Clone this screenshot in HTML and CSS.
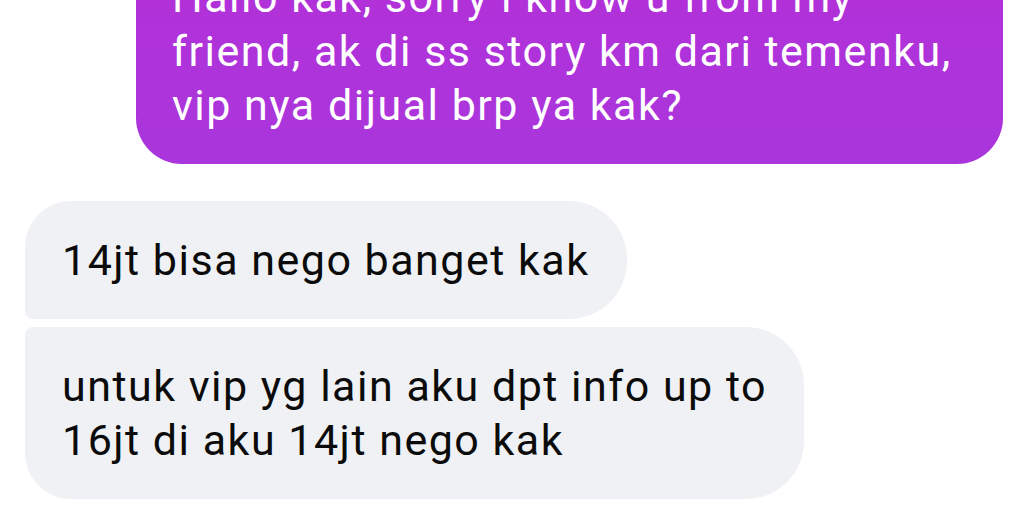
FILE: index.html
```html
<!DOCTYPE html>
<html>
<head>
<meta charset="utf-8">
<link rel="stylesheet" href="styles.css">
</head>
<body>
<div class="chat">
  <div class="row row-out">
    <div class="bubble bubble-out">Hallo kak, sorry i know u from my<br>friend, ak di ss story km dari temenku,<br>vip nya dijual brp ya kak?</div>
  </div>
  <div class="group-in">
    <div class="row row-in">
      <div class="bubble bubble-in first">14jt bisa nego banget kak</div>
    </div>
    <div class="row row-in">
      <div class="bubble bubble-in last">untuk vip yg lain aku dpt info up to<br>16jt di aku 14jt nego kak</div>
    </div>
  </div>
</div>
</body>
</html>
```

FILE: styles.css
```css
html, body {
  margin: 0;
  padding: 0;
  background: #ffffff;
  overflow: hidden;
}
body {
  width: 1026px;
  height: 526px;
  font-family: Roboto, "Liberation Sans", sans-serif;
}
.chat {
  display: flex;
  flex-direction: column;
  margin-top: -62px;
  padding: 0 23px 0 25px;
}
.row {
  display: flex;
}
.row-out {
  justify-content: flex-end;
}
.row-in {
  justify-content: flex-start;
}
.group-in {
  display: flex;
  flex-direction: column;
  gap: 8px;
  margin-top: 37px;
}
.bubble {
  font-size: 43px;
  line-height: 54px;
  letter-spacing: 1.5px;
  padding: 32px 37px;
  white-space: nowrap;
}
.bubble-out {
  background: linear-gradient(180deg, #b52fd8 0%, #a936dc 100%);
  color: #ffffff;
  border-radius: 46px;
  width: 867px;
  box-sizing: border-box;
  padding-left: 36px;
}
.bubble-in {
  background: #eff1f4;
  color: #0b0b0b;
}
.bubble-in.first {
  border-radius: 46px 58px 58px 8px;
}
.bubble-in.last {
  border-radius: 8px 58px 58px 46px;
}
```
